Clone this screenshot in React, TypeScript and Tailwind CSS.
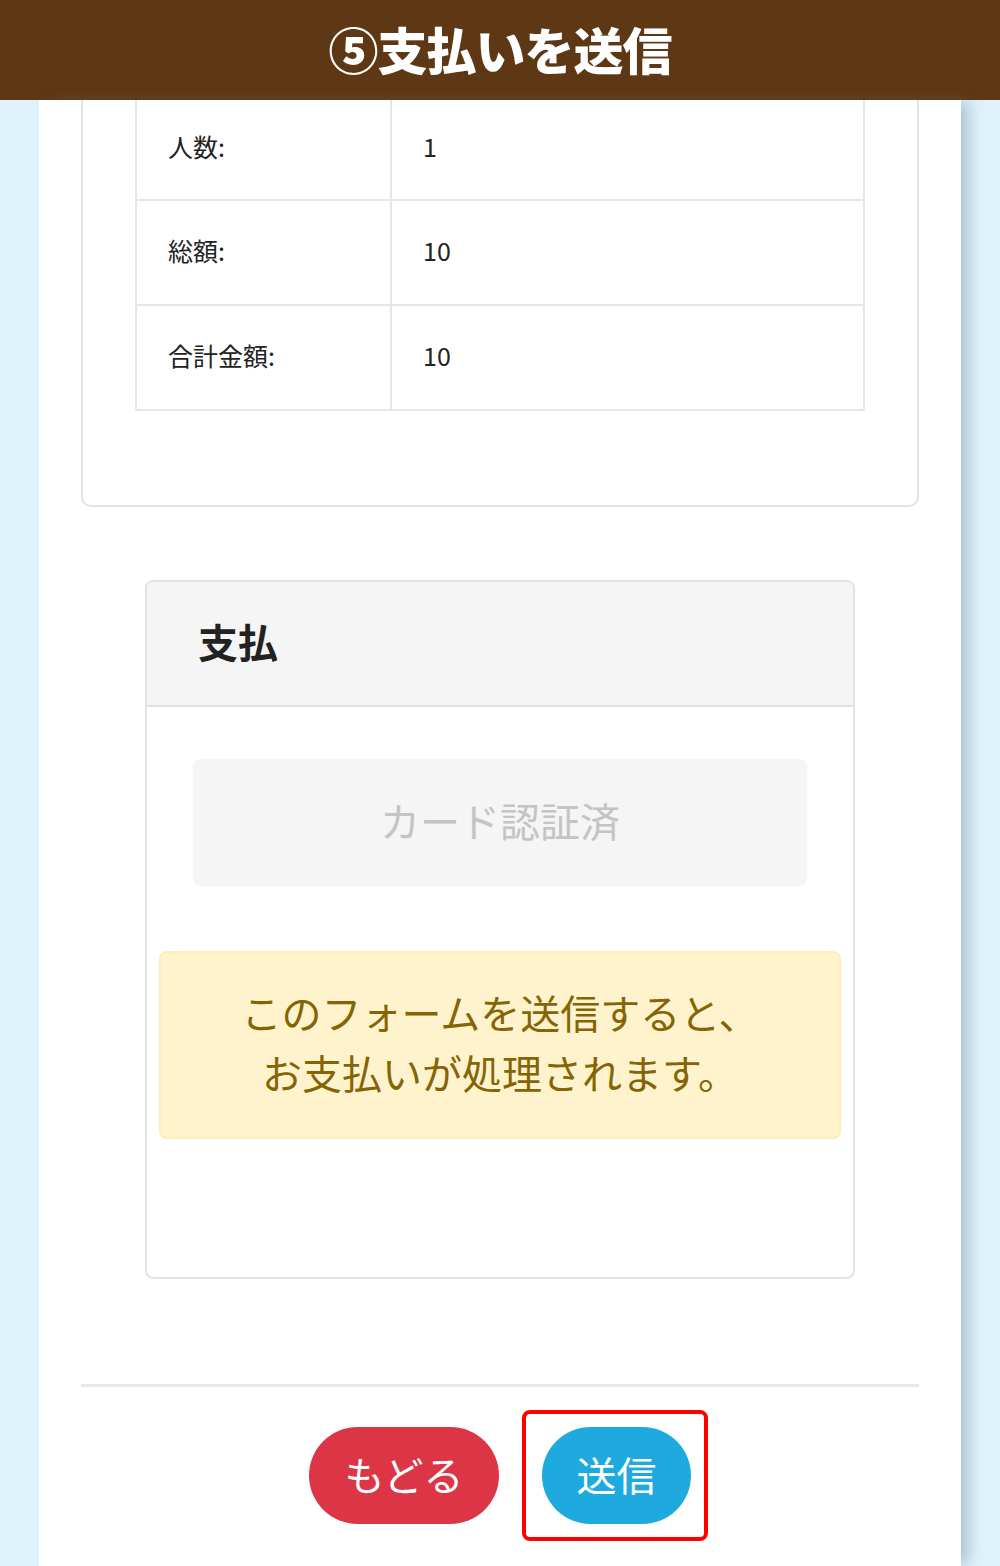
import React from "react";

export default function App() {
  const font = { fontFamily: '"Noto Sans CJK JP", "Noto Sans", sans-serif' };
  return (
    <div className="min-h-[1566px] bg-[#dff3fd] flex flex-col" style={font}>
      <header className="h-[100px] bg-[#5e3714] flex items-center justify-center">
        <h1 className="text-white text-[50px] font-black tracking-[-1px] leading-none -mt-[4px]">⑤支払いを送信</h1>
      </header>
      <div className="flex-1 ml-[39px] w-[922px] bg-white shadow-[10px_0_14px_-2px_rgba(80,110,130,0.35)] px-[42px]">
        {/* summary card */}
        <div className="border-x-2 border-b-2 border-[#e3e3e3] rounded-b-[10px] px-[52px] pb-[94px]">
          <table className="w-full border-collapse text-[25px] text-[#222]">
            <tbody>
              {[
                ["人数:", "1"],
                ["総額:", "10"],
                ["合計金額:", "10"],
              ].map(([k, v], i) => (
                <tr key={i} className={i === 0 ? "h-[100px]" : "h-[105px]"}>
                  <td className={`w-[255px] border-2 border-[#e3e6ea] pl-[31px] pb-[4px] ${i === 0 ? "border-t-0 pb-[6px]" : ""}`}>{k}</td>
                  <td className={`border-2 border-[#e3e6ea] pl-[31px] pb-[4px] ${i === 0 ? "border-t-0 pb-[6px]" : ""}`}>{v}</td>
                </tr>
              ))}
            </tbody>
          </table>
        </div>

        {/* payment card */}
        <div className="mt-[73px] mx-[64px] border-2 border-[#e3e3e3] rounded-[8px] overflow-hidden">
          <div className="h-[125px] bg-[#f5f5f5] border-b-2 border-[#e0e0e0] flex items-center pl-[51px] pb-[6px]">
            <h2 className="text-[40px] font-bold text-[#222] leading-none">支払</h2>
          </div>
          <div className="pt-[52px] pb-[138px] px-[12px]">
            <div className="mx-[34px] h-[127px] bg-[#f5f5f5] rounded-[8px] flex items-center justify-center text-[40px] text-[#c4c4c4] pb-[6px]">
              カード認証済
            </div>
            <div className="mt-[65px] h-[188px] bg-[#fff3cd] border-2 border-[#ffeeba] rounded-[8px] flex items-center justify-center text-center text-[40px] leading-[60px] text-[#856404] pb-[6px]">
              <p>
                このフォームを送信すると、
                <br />
                お支払いが処理されます。
              </p>
            </div>
          </div>
        </div>

        <div className="mt-[105px] h-[3px] bg-[#e8e8e8]" />

        <div className="mt-[40px] flex justify-center gap-[43px]">
          <button className="h-[97px] w-[190px] rounded-full bg-[#dc3545] text-white text-[40px] leading-none pb-[4px]">
            もどる
          </button>
          <div className="relative">
            <button className="h-[97px] w-[149px] rounded-full bg-[#1eaadf] text-white text-[40px] leading-none pb-[4px]">
              送信
            </button>
            <div className="absolute left-[-20px] right-[-17px] top-[-17px] bottom-[-17px] border-[4px] border-[#ff0000] rounded-[8px] pointer-events-none" />
          </div>
        </div>
      </div>
    </div>
  );
}
